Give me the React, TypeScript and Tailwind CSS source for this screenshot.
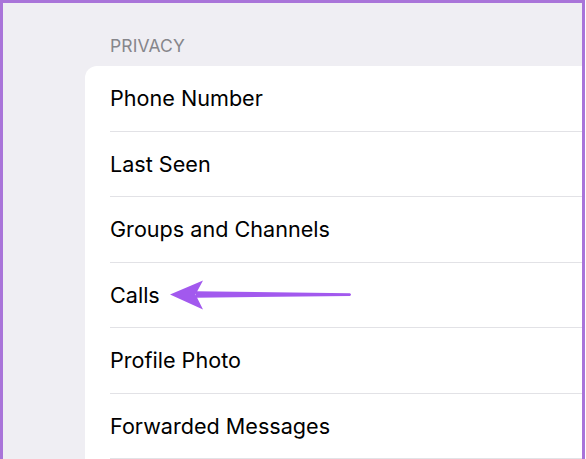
import React from "react";

const rows = [
  "Phone Number",
  "Last Seen",
  "Groups and Channels",
  "Calls",
  "Profile Photo",
  "Forwarded Messages",
];

const App = () => {
  return (
    <div className="w-[586px] h-[459px] overflow-hidden bg-white pr-[1px]">
      <div
        className="relative h-[462px] bg-[#efeef3] border-t-[3px] border-l-[3px] border-r-[3px] border-[#a974d9]"
        style={{ fontFamily: "Inter, 'Noto Sans', sans-serif" }}
      >
        <div className="ml-[82px]">
          <div className="pl-[25px] pt-[33px] mb-[10px] text-[17.5px] leading-[20px] text-[#86868b] tracking-[0.1px]">
            PRIVACY
          </div>
          <div className="bg-white rounded-tl-[12px]">
            {rows.map((r) => (
              <div key={r} className="pl-[25px]">
                <div className="h-[65.5px] flex items-center border-b border-[#e2e2e6] text-[21.6px] text-black">
                  {r}
                </div>
              </div>
            ))}
          </div>
        </div>
        <svg
          className="absolute left-[-3px] top-[-3px] pointer-events-none"
          width="586"
          height="459"
          viewBox="0 0 586 459"
        >
          <path
            d="M196 291.3 L350 293.2 Q352 294.6 350 296 L196 297.7 Z"
            fill="#a259ee"
          />
          <path d="M170 294.5 L203 280.5 L195.5 294.5 L203 309.5 Z" fill="#a259ee" />
        </svg>
      </div>
    </div>
  );
};

export default App;
